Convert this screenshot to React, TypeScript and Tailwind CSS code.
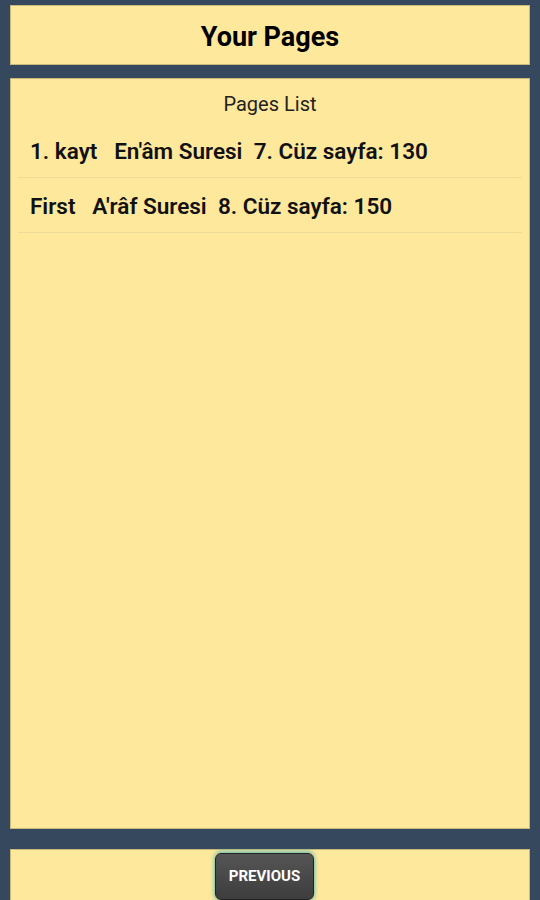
const pages = [
  { title: "1. kayt", sure: "En'âm Suresi", cuz: "7. Cüz", sayfa: 130 },
  { title: "First", sure: "A'râf Suresi", cuz: "8. Cüz", sayfa: 150 },
];

export default function App() {
  return (
    <div
      className="h-[900px] w-[540px] overflow-hidden bg-[#36485e] px-[10px] pt-[5px] flex flex-col"
      style={{ fontFamily: "Roboto, 'Noto Sans', sans-serif" }}
    >
      <div className="h-[60px] shrink-0 bg-[#fee89c] border border-[#c9b878] flex items-center justify-center">
        <h1 className="text-[27px] font-bold text-black pt-[5px]">Your Pages</h1>
      </div>

      <div className="mt-[13px] h-[751px] shrink-0 bg-[#fee89c] border border-[#c9b878] px-[7px]">
        <div className="pt-[12px] text-center text-[20px] text-[#222] leading-[26px]">
          Pages List
        </div>
        <ul className="mt-[6px]">
          {pages.map((p) => (
            <li
              key={p.title}
              className="h-[55px] flex items-center border-b border-[#eedb95] pl-[12px] pt-[3px] text-[22.5px] font-semibold text-[#111] whitespace-pre"
            >
              {`${p.title}   ${p.sure}  ${p.cuz} sayfa: ${p.sayfa}`}
            </li>
          ))}
        </ul>
      </div>

      <div className="mt-[20px] flex-1 bg-[#fee89c] border border-[#c9b878] flex justify-center pt-[3px] pr-[11px]">
        <button
          type="button"
          className="h-[47px] w-[99px] rounded-[6px] bg-gradient-to-b from-[#555] to-[#3d3d3d] border border-[#222] text-white text-[15px] font-bold shadow-[0_-2px_4px_rgba(40,170,190,0.6),0_2px_4px_rgba(40,170,190,0.6)]"
        >
          PREVIOUS
        </button>
      </div>
    </div>
  );
}
